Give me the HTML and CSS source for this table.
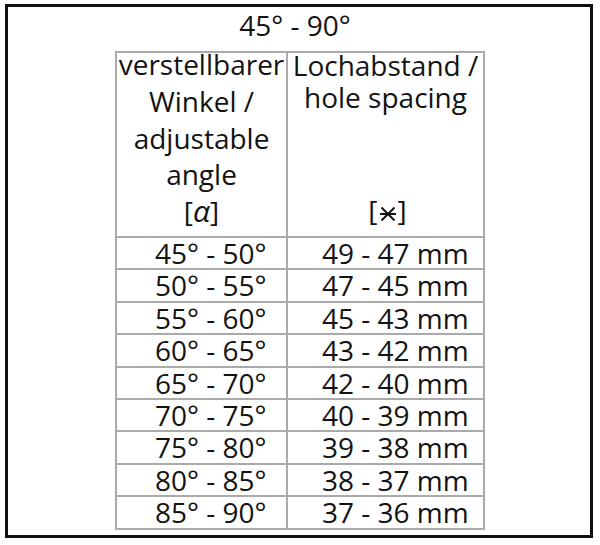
FILE: index.html
```html
<!DOCTYPE html>
<html lang="de">
<head>
<meta charset="utf-8">
<title>45° - 90°</title>
<link rel="stylesheet" href="styles.css">
</head>
<body>
<div class="frame">
  <div class="title">45° - 90°</div>
  <div class="table">
    <div class="row head">
      <div class="cell left">
        <div class="head-left">verstellbarer<br>Winkel /<br>adjustable<br>angle<br>[<span class="alpha">α</span>]</div>
      </div>
      <div class="cell right">
        <div class="head-top">Lochabstand /<br>hole spacing</div>
        <div class="head-sym">[<svg class="sym" viewBox="0 0 18 16" width="18" height="16"><path d="M1 8H17M2.5 1.5L15.5 14.5M2.5 14.5L15.5 1.5"/></svg>]</div>
      </div>
    </div>
    <div class="row"><div class="cell left">45° - 50°</div><div class="cell right">49 - 47 mm</div></div>
    <div class="row"><div class="cell left">50° - 55°</div><div class="cell right">47 - 45 mm</div></div>
    <div class="row"><div class="cell left">55° - 60°</div><div class="cell right">45 - 43 mm</div></div>
    <div class="row"><div class="cell left">60° - 65°</div><div class="cell right">43 - 42 mm</div></div>
    <div class="row"><div class="cell left">65° - 70°</div><div class="cell right">42 - 40 mm</div></div>
    <div class="row"><div class="cell left">70° - 75°</div><div class="cell right">40 - 39 mm</div></div>
    <div class="row"><div class="cell left">75° - 80°</div><div class="cell right">39 - 38 mm</div></div>
    <div class="row"><div class="cell left">80° - 85°</div><div class="cell right">38 - 37 mm</div></div>
    <div class="row"><div class="cell left">85° - 90°</div><div class="cell right">37 - 36 mm</div></div>
  </div>
</div>
</body>
</html>
```

FILE: styles.css
```css
* {
  box-sizing: border-box;
}

body {
  margin: 0;
  background: #fff;
  font-family: "Open Sans", "Noto Sans", sans-serif;
  font-size: 28px;
  color: #131313;
}

.frame {
  width: 588px;
  height: 534px;
  margin: 4px 0 0 5px;
  border: 3px solid #111;
}

.title {
  height: 44px;
  line-height: 36px;
  text-align: center;
  padding-right: 8px;
}

.table {
  width: 370px;
  margin-left: 107px;
  border: 2px solid #aaaaaa;
}

.row {
  display: grid;
  grid-template-columns: 171px 195px;
  height: 32.4px;
  border-top: 2px solid #aaaaaa;
  line-height: 30.4px;
  white-space: nowrap;
}

.row .left {
  border-right: 2px solid #aaaaaa;
  padding-left: 38px;
}

.row .right {
  padding-left: 34px;
}

.row.head {
  height: 183px;
  border-top: 0;
}

.row.head .left,
.row.head .right {
  padding-left: 0;
  text-align: center;
}

.head-left {
  line-height: 36.75px;
  margin-top: -7px;
}

.alpha {
  font-style: italic;
  font-size: 30px;
}

.row.head .right {
  display: flex;
  flex-direction: column;
  justify-content: space-between;
  padding-bottom: 7px;
}

.head-top {
  line-height: 31.5px;
  margin-top: -3px;
}

.head-sym {
  line-height: 36.75px;
  padding-left: 4px;
}

.sym {
  vertical-align: -1px;
  margin: 0 1px;
}

.sym path {
  fill: none;
  stroke: #131313;
  stroke-width: 2;
}
```
